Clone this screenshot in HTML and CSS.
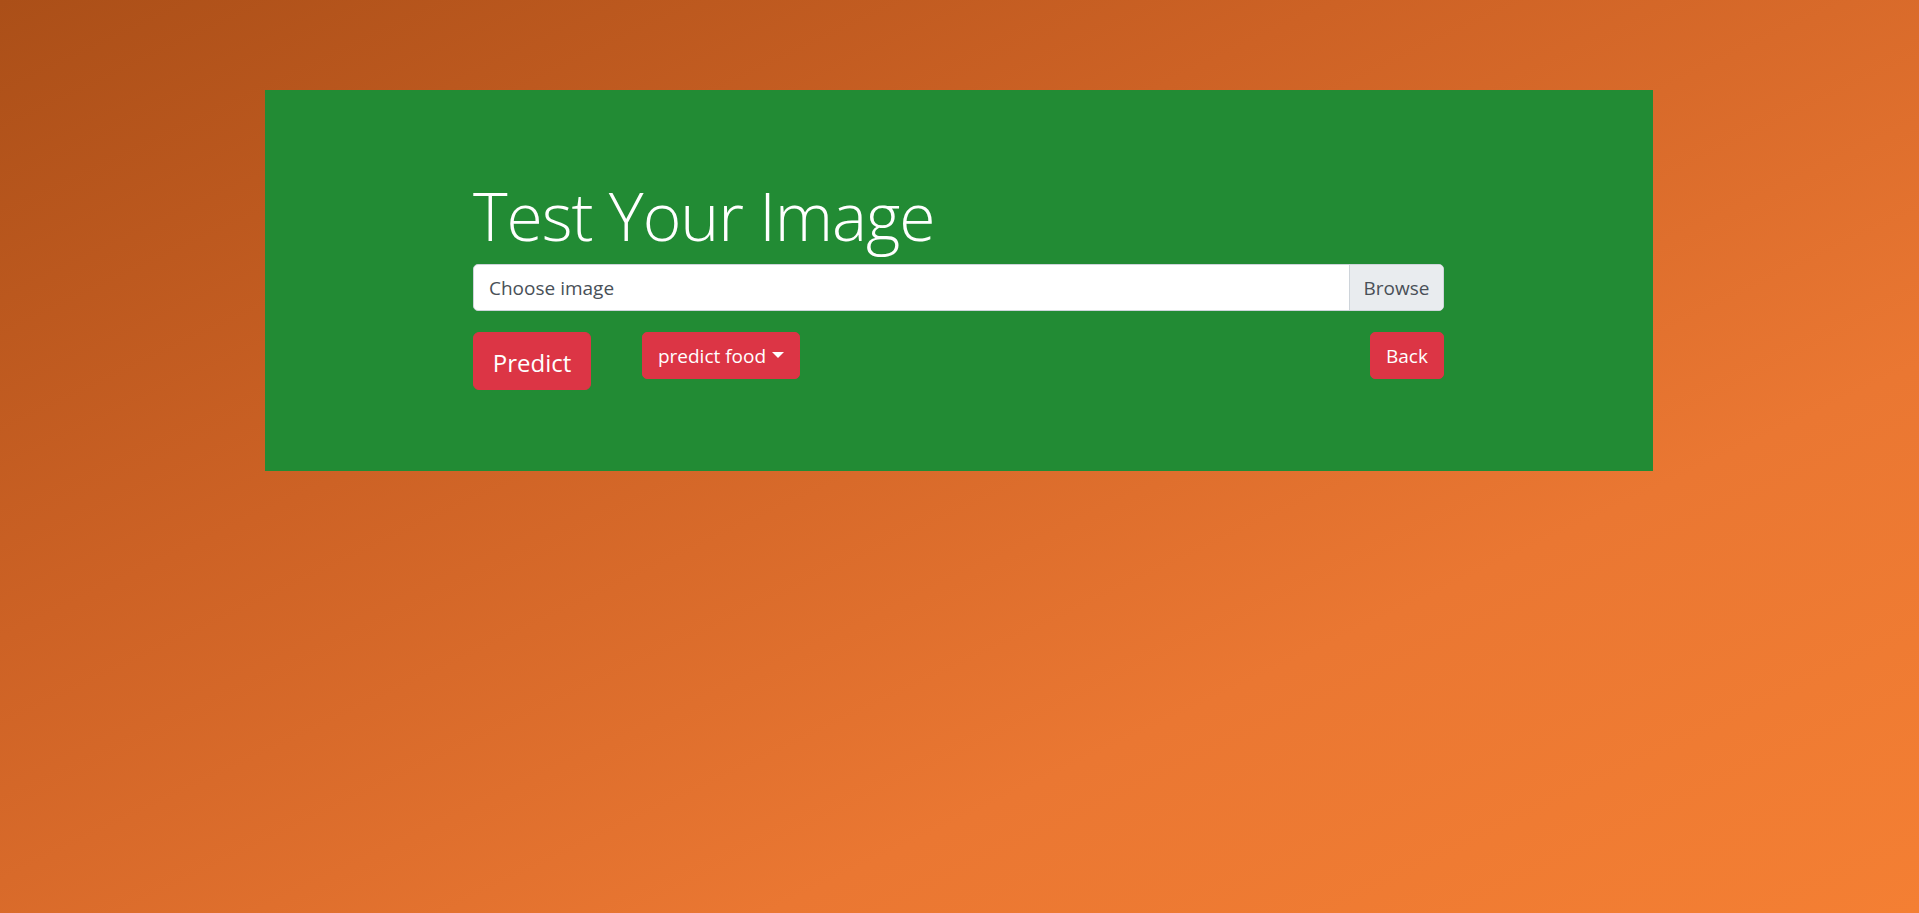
FILE: index.html
```html
<!DOCTYPE html>
<html lang="en">
<head>
<meta charset="utf-8">
<title>Test Your Image</title>
<link rel="stylesheet" href="styles.css">
</head>
<body>
<div class="page">
  <div class="jumbo">
    <h1 class="title">Test Your Image</h1>
    <div class="file">
      <span class="file-label">Choose image</span>
      <span class="file-browse">Browse</span>
    </div>
    <div class="actions">
      <button class="btn btn-lg">Predict</button>
      <button class="btn btn-drop">predict food<span class="caret"></span></button>
      <button class="btn btn-back">Back</button>
    </div>
  </div>
</div>
</body>
</html>
```
FILE: styles.css
```css
html, body {
  margin: 0;
  padding: 0;
}
body {
  font-family: "Open Sans", "Noto Sans", sans-serif;
  background: linear-gradient(to bottom right, #ab4f18 0%, #cd6225 35%, #ea7732 70%, #f47f33 100%);
  min-height: 913px;
}
.page {
  padding: 90px 266px 0 265px;
}
.jumbo {
  background: #228b34;
  height: 381px;
  box-sizing: border-box;
  padding: 80px 209px 0 208px;
}
.title {
  margin: 0 0 4px 0;
  font-weight: 300;
  font-size: 66px;
  line-height: 90px;
  color: #fff;
  letter-spacing: -1px;
}
.file {
  display: flex;
  height: 47px;
  box-sizing: border-box;
  border: 1px solid #ced4da;
  border-radius: 5px;
  background: #fff;
  overflow: hidden;
  font-size: 19px;
  color: #495057;
}
.file-label {
  flex: 1;
  padding: 2px 15px 0;
  line-height: 43px;
}
.file-browse {
  width: 94px;
  box-sizing: border-box;
  border-left: 1px solid #ced4da;
  background: #e9ecef;
  padding-top: 2px;
  line-height: 43px;
  text-align: center;
}
.actions {
  display: flex;
  align-items: flex-start;
  margin-top: 21px;
}
.btn {
  font-family: inherit;
  background: #dc3545;
  color: #fff;
  border: 1px solid #dc3545;
  border-radius: 5px;
  font-size: 19px;
  height: 47px;
  padding: 0 15px;
  cursor: pointer;
}
.btn-lg {
  font-size: 24px;
  height: 58px;
  width: 118px;
  padding: 2px 0 0;
  border-radius: 6px;
}
.btn-drop {
  margin-left: 51px;
  width: 158px;
  padding: 0;
}
.caret {
  display: inline-block;
  margin-left: 6px;
  vertical-align: 5px;
  border-top: 6px solid #fff;
  border-left: 6px solid transparent;
  border-right: 6px solid transparent;
}
.btn-back {
  margin-left: auto;
  width: 74px;
  padding: 0;
}
```
